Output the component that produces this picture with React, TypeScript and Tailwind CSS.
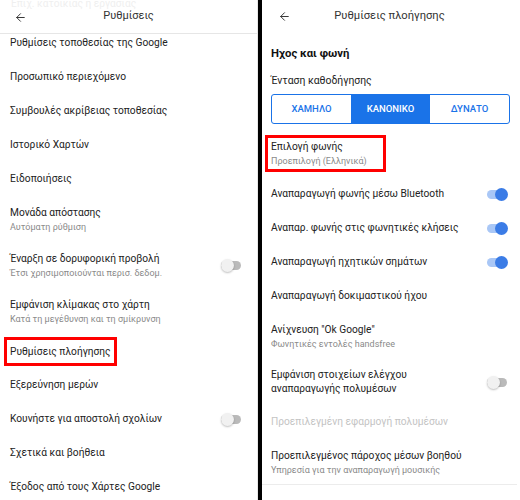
import React from 'react';
import { ArrowLeft } from 'lucide-react';

type Row = {
  title: string;
  sub?: string;
  toggle?: 'on' | 'off';
  h?: string;
  muted?: boolean;
};

const leftRows: Row[] = [
  { title: 'Ρυθμίσεις τοποθεσίας της Google', h: 'h-[26px] pb-[8px]' },
  { title: 'Προσωπικό περιεχόμενο' },
  { title: 'Συμβουλές ακρίβειας τοποθεσίας' },
  { title: 'Ιστορικό Χαρτών' },
  { title: 'Ειδοποιήσεις' },
  { title: 'Μονάδα απόστασης', sub: 'Αυτόματη ρύθμιση' },
  { title: 'Έναρξη σε δορυφορική προβολή', sub: 'Έτσι χρησιμοποιούνται περισ. δεδομ.', toggle: 'off' },
  { title: 'Εμφάνιση κλίμακας στο χάρτη', sub: 'Κατά τη μεγέθυνση και τη σμίκρυνση' },
];

const leftRowsAfter: Row[] = [
  { title: 'Εξερεύνηση μερών' },
  { title: 'Κουνήστε για αποστολή σχολίων', toggle: 'off' },
  { title: 'Σχετικά και βοήθεια' },
  { title: 'Έξοδος από τους Χάρτες Google' },
];

const rightRows: Row[] = [
  { title: 'Αναπαραγωγή φωνής μέσω Bluetooth', toggle: 'on' },
  { title: 'Αναπαρ. φωνής στις φωνητικές κλήσεις', toggle: 'on' },
  { title: 'Αναπαραγωγή ηχητικών σημάτων', toggle: 'on' },
  { title: 'Αναπαραγωγή δοκιμαστικού ήχου' },
  { title: 'Ανίχνευση "Ok Google"', sub: 'Φωνητικές εντολές handsfree' },
  { title: 'Εμφάνιση στοιχείων ελέγχου\nαναπαραγωγής πολυμέσων', toggle: 'off', h: 'h-[46px]' },
  { title: 'Προεπιλεγμένη εφαρμογή πολυμέσων', muted: true },
  { title: 'Προεπιλεγμένος πάροχος μέσων βοηθού', sub: 'Υπηρεσία για την αναπαραγωγή μουσικής' },
];

const Toggle = ({ on }: { on: boolean }) => (
  <div className="relative w-[21px] h-[13px] flex items-center shrink-0">
    <div className={on ? 'w-[20px] h-[9px] rounded-full bg-[#a9c7f6]' : 'w-[20px] h-[9px] rounded-full bg-[#bababa]'} />
    {on ? (
      <div className="absolute right-0 top-0 w-[13px] h-[13px] rounded-full bg-[#3b7ce6]" />
    ) : (
      <div className="absolute left-0 top-0 w-[13px] h-[13px] rounded-full bg-[#f1f1f1] shadow-[0_1px_2px_rgba(0,0,0,0.25)]" />
    )}
  </div>
);

const SettingRow = ({ row }: { row: Row }) => {
  const height = row.h ?? (row.sub ? 'h-[46px]' : 'h-[34px]');
  return (
    <div className={`${height} flex items-center justify-between shrink-0`}>
      <div className="flex flex-col">
        <div className={row.muted ? 'text-[10.2px] leading-[14px] text-[#c4c4c4] whitespace-pre-line' : 'text-[10.2px] leading-[14px] text-[#222222] whitespace-pre-line'}>
          {row.title}
        </div>
        {row.sub && <div className="text-[9px] leading-[12px] text-[#8a8a8a] mt-[1px]">{row.sub}</div>}
      </div>
      {row.toggle && <Toggle on={row.toggle === 'on'} />}
    </div>
  );
};

const App = () => {
  return (
    <div className="w-[520px] h-[500px] flex overflow-hidden bg-white font-['Roboto','Liberation_Sans',sans-serif]">
      {/* left screen */}
      <div className="w-[258px] h-full border-r border-[#e8e8e8] flex flex-col">
        <div className="relative h-[34px] shrink-0 border-b border-[#e6e6e6] flex items-center justify-center">
          <div className="absolute left-[11px] top-[-4px] text-[10.2px] text-[#efefef]">Επιχ. κατοικίας ή εργασίας</div>
          <ArrowLeft className="absolute left-[14px] top-[11px] text-[#333333]" size={13} strokeWidth={1.8} />
          <div className="text-[11px] text-[#333333]">Ρυθμίσεις</div>
        </div>
        <div className="pl-[10px] pr-[15px] flex flex-col">
          {leftRows.map((r) => (
            <SettingRow key={r.title} row={r} />
          ))}
          <div className="h-[34px] flex items-center">
            <span className="-ml-[6px] px-[3px] py-[4px] border-[3px] border-[#ff0000] text-[10.2px] leading-[15px] text-[#222222]">
              Ρυθμίσεις πλοήγησης
            </span>
          </div>
          {leftRowsAfter.map((r) => (
            <SettingRow key={r.title} row={r} />
          ))}
        </div>
      </div>

      <div className="w-[4px] h-full bg-black shrink-0" />

      {/* right screen */}
      <div className="w-[258px] h-full flex flex-col pl-[9px] pr-[12px]">
        <div className="relative h-[32px] shrink-0 flex items-center justify-center">
          <ArrowLeft className="absolute left-[7px] top-[10px] text-[#333333]" size={13} strokeWidth={1.8} />
          <div className="text-[11.2px] text-[#333333]">Ρυθμίσεις πλοήγησης</div>
        </div>
        <div className="pt-[14px] text-[11.3px] leading-[16px] font-bold text-[#111111]">Ηχος και φωνή</div>
        <div className="mt-[12px] text-[10.4px] leading-[14px] text-[#222222]">Ένταση καθοδήγησης</div>
        <div className="mt-[6px] mr-[-2px] h-[30px] flex border border-[#1a73e8] rounded-[3px] overflow-hidden text-[9.5px] font-medium">
          <div className="flex-1 flex items-center justify-center text-[#1a73e8]">ΧΑΜΗΛΟ</div>
          <div className="flex-1 flex items-center justify-center bg-[#1a73e8] text-white">ΚΑΝΟΝΙΚΟ</div>
          <div className="flex-1 flex items-center justify-center text-[#1a73e8]">ΔΥΝΑΤΟ</div>
        </div>
        <div className="mt-[6px] h-[47px] flex items-center">
          <div className="-ml-[6px] px-[3px] py-[2px] border-[3px] border-[#ff0000] w-[121px] flex flex-col">
            <div className="text-[10.2px] leading-[14px] text-[#222222]">Επιλογή φωνής</div>
            <div className="text-[9px] leading-[12px] text-[#8a8a8a] mt-[1px]">Προεπιλογή (Ελληνικά)</div>
          </div>
        </div>
        {rightRows.map((r) => (
          <SettingRow key={r.title} row={r} />
        ))}
        <div className="mt-[-1px] -mx-[9px] border-t border-[#ececec]" />
      </div>
    </div>
  );
};

export default App;
